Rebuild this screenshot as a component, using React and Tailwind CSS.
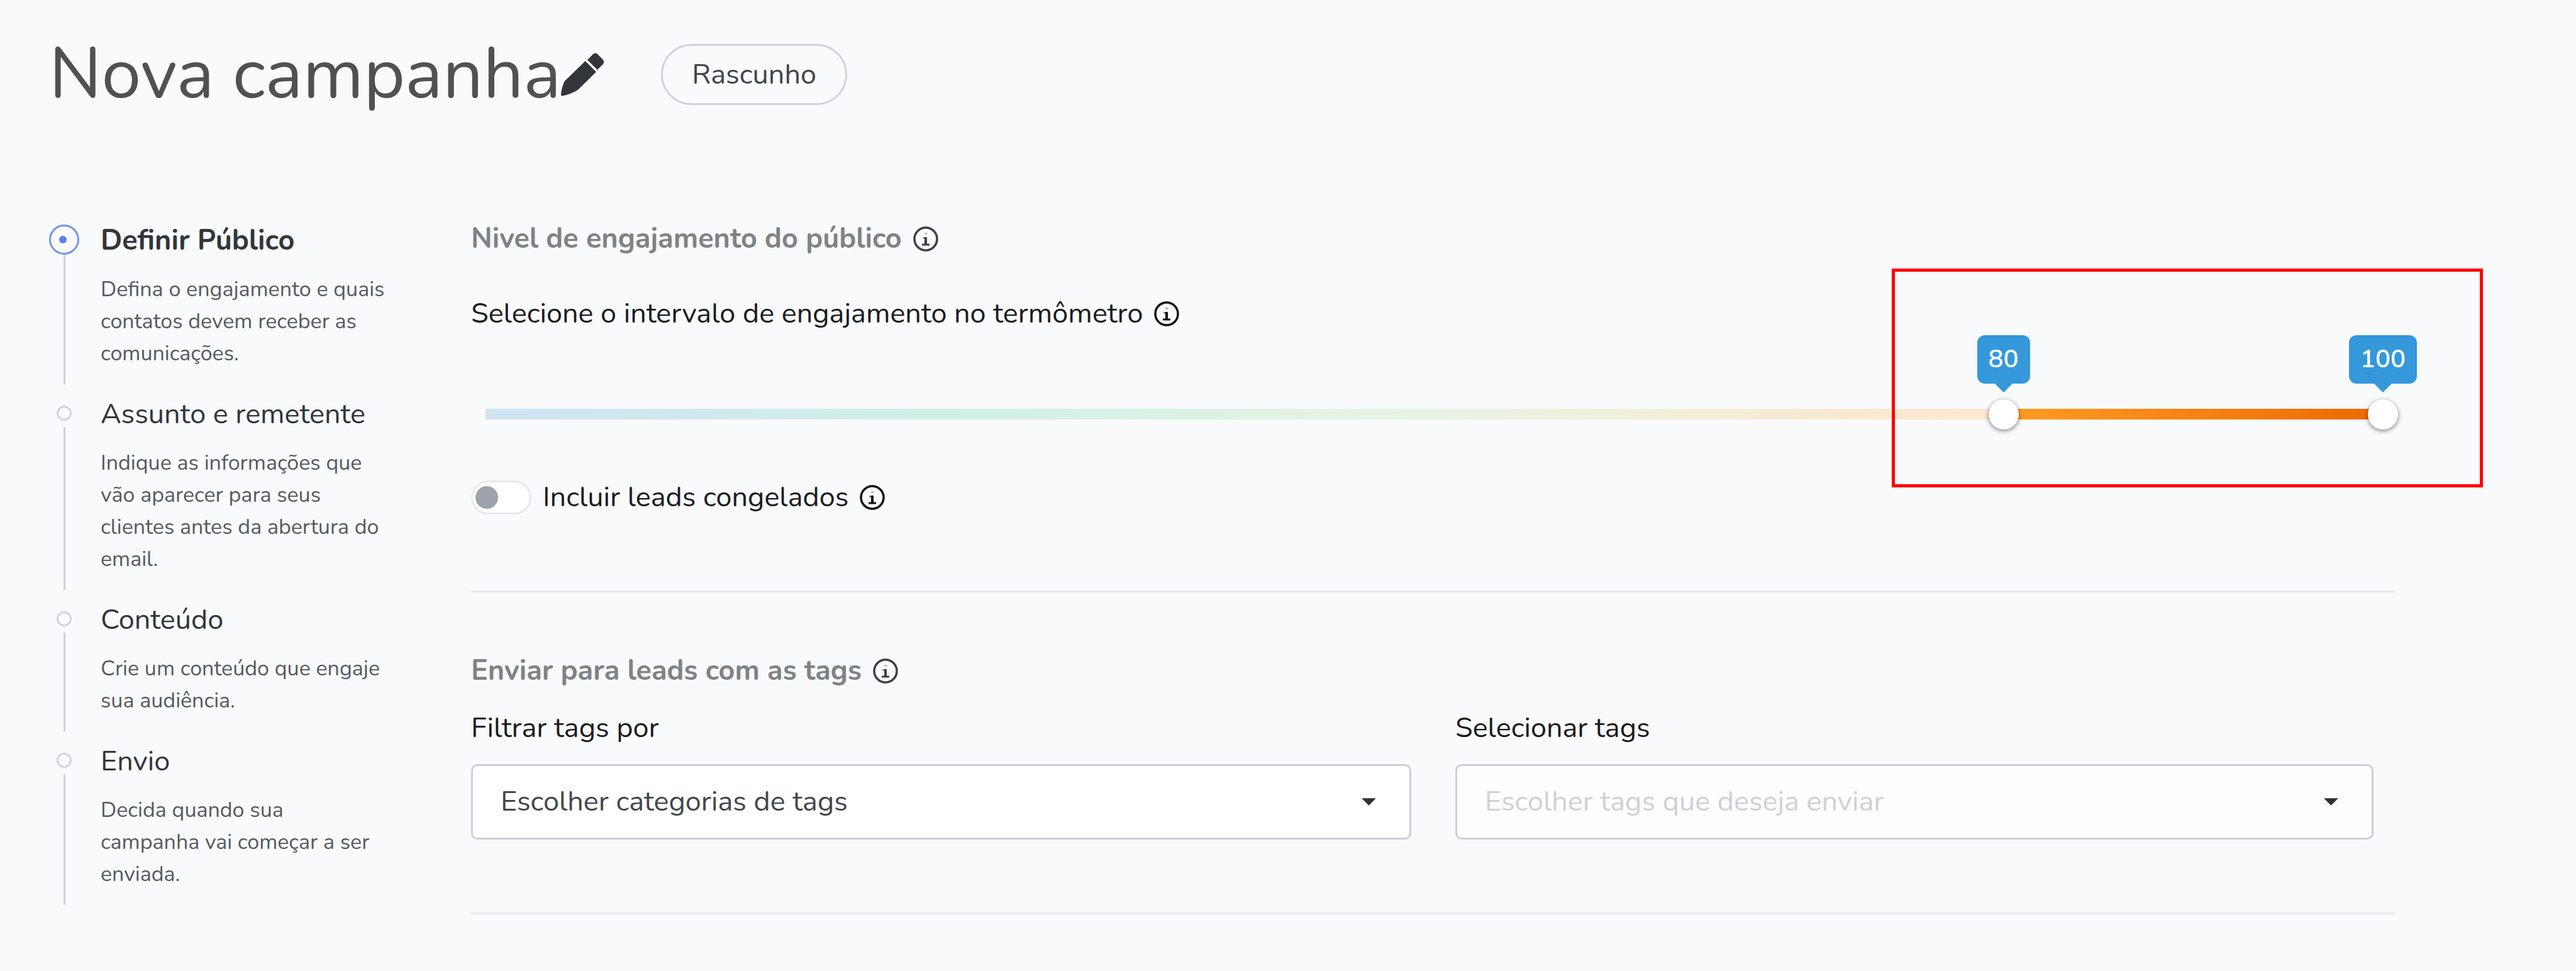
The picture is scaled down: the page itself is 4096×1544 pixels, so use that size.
import { useState } from 'react';
import clsx from 'clsx';

const STEPS = [
  {
    title: 'Definir Público',
    description: 'Defina o engajamento e quais contatos devem receber as comunicações.',
  },
  {
    title: 'Assunto e remetente',
    description: 'Indique as informações que vão aparecer para seus clientes antes da abertura do email.',
  },
  {
    title: 'Conteúdo',
    description: 'Crie um conteúdo que engaje sua audiência.',
  },
  {
    title: 'Envio',
    description: 'Decida quando sua campanha vai começar a ser enviada.',
  },
];

const PencilIcon = () => (
  <svg className="size-[69px] shrink-0" viewBox="21 31 74 74" fill="#32363b" aria-hidden="true">
    <path d="M66 43 L75.500 33.500 Q79 30 83 33 L92.500 42.500 Q96 46.500 92.500 50.500 L83 60 Z" />
    <path d="M62.500 45 L81 63.500 L52 92 Q48.500 95.500 44 97.500 Q35 102 24 104.500 Q20.500 105 21 101 Q22 91 26 81.500 Q27.500 78.500 30 76.500 Z" />
  </svg>
);

const InfoIcon = ({ className }) => (
  <svg className={clsx('size-10 shrink-0', className)} viewBox="0 0 40 40" fill="none" stroke="currentColor" aria-hidden="true">
    <circle cx="20" cy="20" r="18" strokeWidth="3.500" />
    <path d="M18 11.500h4.500" strokeWidth="2.500" opacity="0.350" />
    <path d="M15.500 18.500h5" strokeWidth="3" opacity="0.600" />
    <path d="M20 17v12" strokeWidth="4" />
    <path d="M14 29h12" strokeWidth="3" />
  </svg>
);

const Step = ({ title, description, active }) => (
  <li className="flex gap-[34px]" aria-current={active ? 'step' : undefined}>
    <div className="flex w-12 shrink-0 flex-col items-center pb-3.5">
      {active ? (
        <span className="mt-2 flex size-12 shrink-0 items-center justify-center rounded-full border-3 border-[#7396ec] pr-1">
          <span className="size-3 rounded-full bg-[#5a80e6]" />
        </span>
      ) : (
        <span className="mt-5 mb-2.5 size-6 shrink-0 rounded-full border-3 border-[#d0d5da]" />
      )}
      <span className="w-[3px] flex-1 bg-[#ccd1d7]" />
    </div>
    <div className="w-[454px] pb-[37px]">
      <h2 className={clsx('text-[45px] leading-[68px] whitespace-nowrap text-[#32363b]', active ? 'font-bold' : 'font-normal')}>
        {title}
      </h2>
      <p className="mt-[18px] text-[34px] leading-[51px] text-[#565b61]">{description}</p>
    </div>
  </li>
);

const SectionTitle = ({ children }) => (
  <div className="flex items-center gap-[18px]">
    <h2 className="text-[45px] leading-[68px] font-bold text-[#808284]">{children}</h2>
    <InfoIcon className="text-[#3c4044]" />
  </div>
);

const thumbClasses =
  'pointer-events-none absolute -left-6 top-1/2 h-12 w-[calc(100%+48px)] -translate-y-1/2 appearance-none bg-transparent ' +
  '[&::-webkit-slider-thumb]:pointer-events-auto [&::-webkit-slider-thumb]:size-12 [&::-webkit-slider-thumb]:appearance-none ' +
  '[&::-webkit-slider-thumb]:rounded-full [&::-webkit-slider-thumb]:bg-white ' +
  '[&::-webkit-slider-thumb]:shadow-[0_2px_6px_1px_rgba(0,0,0,0.4)]';

const ValueBubble = ({ value }) => (
  <output
    className="absolute bottom-full mb-10 flex -translate-x-1/2 justify-center rounded-xl bg-[#3498db] px-[18px] text-[40px] leading-[77px] font-semibold text-white"
    style={{ left: `${value}%` }}
  >
    {value}
    <span className="absolute top-full border-x-14 border-t-14 border-x-transparent border-t-[#3498db]" />
  </output>
);

const EngagementSlider = () => {
  const [min, setMin] = useState(80);
  const [max, setMax] = useState(100);

  return (
    <div className="relative mt-[117px] mr-[19px] ml-[23px] h-[17px] bg-[linear-gradient(90deg,#cfe3f2_0%,#d0f0e6_25%,#e8f3e3_50%,#fae8d0_75%,#fae4cc_100%)]">
      <div
        className="absolute inset-y-0 bg-linear-to-r from-[#ff9b22] to-[#ed6800]"
        style={{ left: `${min}%`, width: `${max - min}%` }}
      />
      <ValueBubble value={min} />
      <ValueBubble value={max} />
      <input
        type="range"
        aria-label="Engajamento mínimo"
        className={thumbClasses}
        value={min}
        onChange={(e) => setMin(Math.min(Number(e.target.value), max))}
      />
      <input
        type="range"
        aria-label="Engajamento máximo"
        className={thumbClasses}
        value={max}
        onChange={(e) => setMax(Math.max(Number(e.target.value), min))}
      />
      <div className="pointer-events-none absolute -top-[223px] -right-[159px] h-[348px] w-[940px] border-5 border-[#ff0000]" />
    </div>
  );
};

const SelectField = ({ id, label, option, disabled }) => (
  <div>
    <label htmlFor={id} className="block text-[45px] leading-[68px] text-[#1b1c1e]">{label}</label>
    <div className="relative mt-[23px]">
      <select
        id={id}
        disabled={disabled}
        className={clsx(
          'h-[120px] w-full appearance-none rounded-[10px] border-3 border-[#ccd0d6] px-11 text-[45px] disabled:opacity-100',
          disabled ? 'bg-[#fcfdfe] text-[#cdd1d7]' : 'bg-white text-[#43474c]'
        )}
      >
        <option>{option}</option>
      </select>
      <svg className="pointer-events-none absolute top-[54px] right-[56px] h-3 w-[23px]" viewBox="0 0 24 12" fill="#2d3136" aria-hidden="true">
        <path d="M0 0h24L12 12z" />
      </svg>
    </div>
  </div>
);

export default function App() {
  const [includeFrozen, setIncludeFrozen] = useState(false);

  return (
    <div className="min-h-screen bg-[#f8fafc] pt-[70px] pr-[288px] pl-[78px] font-[Nunito,Lato,sans-serif]">
      {/* Header */}
      <header className="flex items-center">
        <h1 className="text-[113px] leading-[97px] font-normal whitespace-nowrap text-[#505152]">Nova campanha</h1>
        <button type="button" aria-label="Editar nome">
          <PencilIcon />
        </button>
        <span className="ml-[90px] rounded-full border-3 border-[#ced3da] px-[46px] text-[45px] leading-[91px] text-[#41454a]">
          Rascunho
        </span>
      </header>

      <div className="mt-[179px] flex">
        {/* Steps */}
        <ol className="shrink-0 pt-[3px]">
          {STEPS.map((step, index) => (
            <Step key={step.title} {...step} active={index === 0} />
          ))}
        </ol>

        <main className="ml-[135px] min-w-0 flex-1">
          <section>
            <SectionTitle>Nivel de engajamento do público</SectionTitle>
            <div className="mt-[51px] flex items-center gap-[18px]">
              <p className="text-[45px] leading-[68px] text-[#1b1c1e]">Selecione o intervalo de engajamento no termômetro</p>
              <InfoIcon className="text-[#111111]" />
            </div>

            <EngagementSlider />

            <div className="mt-[90px] flex items-center gap-[18px]">
              <label className="flex items-center gap-[18px] text-[45px] leading-[68px] text-[#1b1c1e]">
                <input
                  type="checkbox"
                  role="switch"
                  checked={includeFrozen}
                  onChange={(e) => setIncludeFrozen(e.target.checked)}
                  className="flex h-[54px] w-24 appearance-none items-center rounded-full border-3 border-[#e6e9ee] bg-white px-1 before:size-9 before:rounded-full before:bg-[#9ca3ab] checked:justify-end checked:before:bg-[#3498db]"
                />
                Incluir leads congelados
              </label>
              <InfoIcon className="text-[#111111]" />
            </div>
          </section>

          <hr className="mt-[114px] border-t-3 border-[#e7e9ed]" />

          <section className="mt-[91px]">
            <SectionTitle>Enviar para leads com as tags</SectionTitle>
            <div className="mt-[23px] mr-[34px] grid grid-cols-[1495fr_1460fr] gap-[70px]">
              <SelectField id="tag-category" label="Filtrar tags por" option="Escolher categorias de tags" />
              <SelectField id="tags" label="Selecionar tags" option="Escolher tags que deseja enviar" disabled />
            </div>
          </section>

          <hr className="mt-[116px] border-t-3 border-[#e7e9ed]" />
        </main>
      </div>
    </div>
  );
}
